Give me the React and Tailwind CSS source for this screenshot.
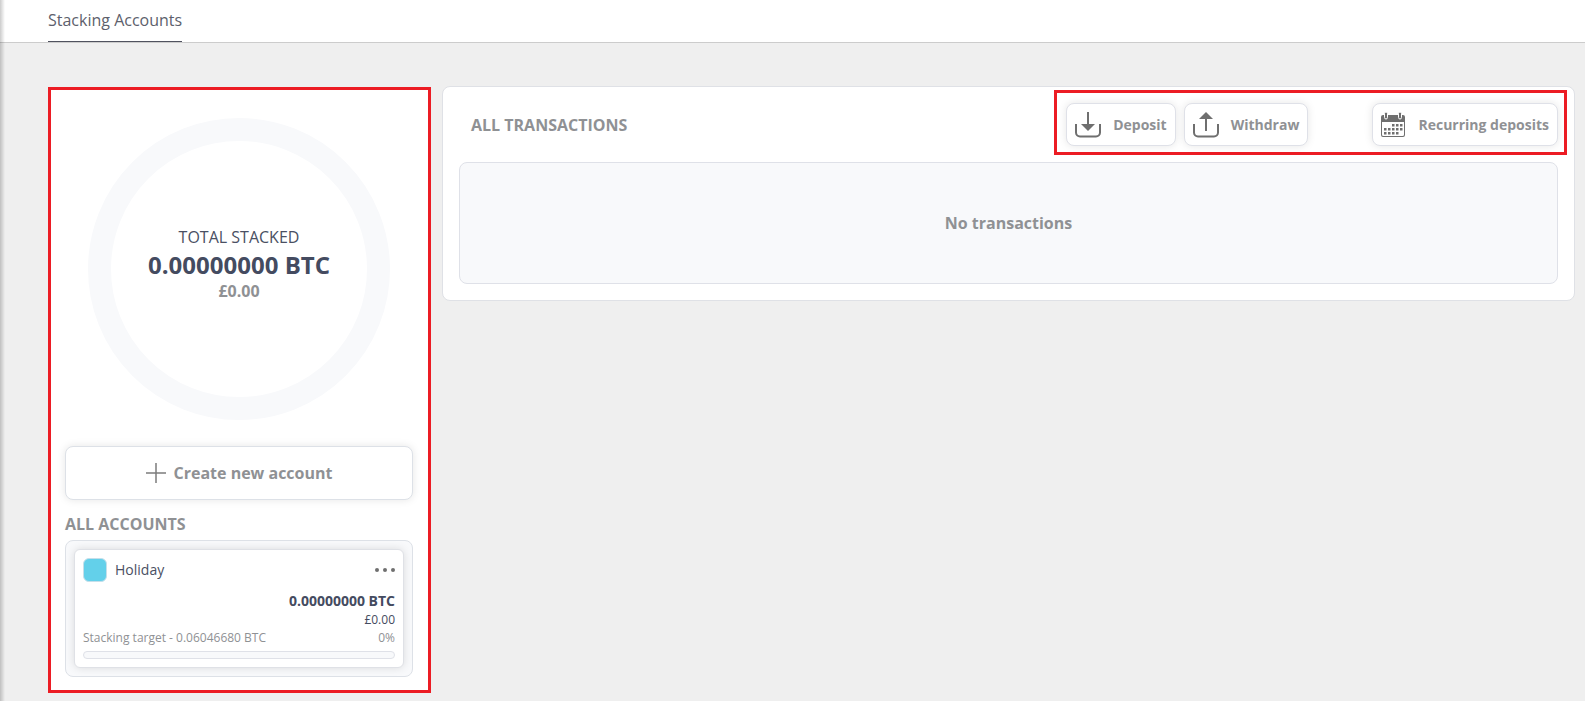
import React from "react";

const accounts = [
  {
    id: 1,
    name: "Holiday",
    balance: "0.00000000 BTC",
    fiat: "£0.00",
    target: "0.06046680 BTC",
    progress: 0,
  },
];

/* ================= ICONS ================= */

const TrayIcon = ({ up }) => (
  <svg width="26" height="26" viewBox="0 0 26 26" fill="none" aria-hidden="true">
    <path
      d="M1 12v8.500a4 4 0 0 0 4 4h16a4 4 0 0 0 4-4V12"
      stroke="#6f6f6f"
      strokeWidth="2"
    />
    {up ? (
      <>
        <path d="M13 5v14" stroke="#6f6f6f" strokeWidth="2" />
        <path d="M13 0l7 7H6z" fill="#6f6f6f" />
      </>
    ) : (
      <>
        <path d="M13 0v14" stroke="#6f6f6f" strokeWidth="2" />
        <path d="M13 19l7-7H6z" fill="#6f6f6f" />
      </>
    )}
  </svg>
);

const calendarDays = [
  [11, 12], [15, 12], [19, 12],
  [3, 16], [7, 16], [11, 16], [15, 16], [19, 16],
  [3, 20], [7, 20], [11, 20], [15, 20],
];

const CalendarIcon = () => (
  <svg width="25" height="26" viewBox="0 0 25 26" aria-hidden="true">
    <path
      fill="#6f6f6f"
      fillRule="evenodd"
      d="M2 3h20a2 2 0 0 1 2 2v18a2 2 0 0 1-2 2H2a2 2 0 0 1-2-2V5a2 2 0 0 1 2-2zM1 10v12.500a1.500 1.500 0 0 0 1.500 1.500h19a1.500 1.500 0 0 0 1.500-1.500V10z"
    />
    <rect x="3.500" y="0" width="3" height="7" rx="1.500" fill="#6f6f6f" stroke="#fff" />
    <rect x="17.500" y="0" width="3" height="7" rx="1.500" fill="#6f6f6f" stroke="#fff" />
    {calendarDays.map(([x, y]) => (
      <rect key={`${x}-${y}`} x={x} y={y} width="2.500" height="2.500" fill="#6f6f6f" />
    ))}
  </svg>
);

const PlusIcon = () => (
  <svg width="20" height="20" viewBox="0 0 20 20" aria-hidden="true">
    <path d="M10 0v20M0 10h20" stroke="#7c7c7c" strokeWidth="1.500" />
  </svg>
);

const DotsIcon = () => (
  <svg width="20" height="4" viewBox="0 0 20 4" fill="#6f6f6f" aria-hidden="true">
    <circle cx="2" cy="2" r="2" />
    <circle cx="10" cy="2" r="2" />
    <circle cx="18" cy="2" r="2" />
  </svg>
);

/* ================= PARTS ================= */

const ActionButton = ({ icon, label }) => (
  <button
    type="button"
    className="flex h-[43px] items-center gap-3 rounded-lg border border-[#dfe1e8] bg-white px-2 text-sm font-bold text-[#8f9194] shadow-[0_0_8px_rgba(0,0,0,0.1)]"
  >
    {icon}
    {label}
  </button>
);

const AccountCard = ({ account }) => (
  <div className="rounded-md border border-[#dfe1e6] bg-white p-2 shadow-[0_0_8px_rgba(0,0,0,0.12)]">
    <div className="flex h-6 items-center gap-2">
      <span className="h-6 w-6 rounded-md border border-[#c5dfea] bg-[#63d0ea]" />
      <span className="flex-1 text-sm leading-[22px] text-[#4a5063]">{account.name}</span>
      <button type="button" aria-label="Account options">
        <DotsIcon />
      </button>
    </div>

    <div className="mt-2 text-right text-sm leading-[21px] font-bold text-[#444b60]">
      {account.balance}
    </div>
    <div className="text-right text-xs leading-[18px] text-[#444b60]">
      {account.fiat}
    </div>
    <div className="flex justify-between text-xs leading-[18px] text-[#8f9194]">
      <span>Stacking target - {account.target}</span>
      <span>{account.progress}%</span>
    </div>

    <div className="mt-1 h-2 overflow-hidden rounded-full border border-[#dfe1e8] bg-[#f8f9fb]">
      <div
        className="h-full bg-[#63d0ea]"
        style={{ width: `${account.progress}%` }}
      />
    </div>
  </div>
);

const App = () => {
  return (
    <div className="relative min-h-screen bg-[#efefef] font-['Open_Sans',sans-serif]">

      {/* shadow of the side menu */}
      <div className="absolute inset-y-0 left-0 w-[5px] bg-linear-to-r from-black/20 to-transparent" />

      {/* ================= HEADER ================= */}
      <header className="flex h-[43px] border-b border-[#cccccc] bg-white pl-12">
        <a
          href="#stacking"
          className="border-b border-[#50525f] pt-2 text-base text-[#5d5f6c]"
        >
          Stacking Accounts
        </a>
      </header>

      <main className="flex items-start gap-[11px] pt-[43px] pr-[10px] pl-12">

        {/* ================= ACCOUNTS ================= */}
        <section className="mt-px w-[383px] shrink-0 border-3 border-[#ec1c24] bg-white pt-[28px] pr-[15px] pb-[13px] pl-[14px]">
          <div className="mx-auto flex h-[302px] w-[302px] flex-col items-center justify-center rounded-full border-[23px] border-[#f8f9fb] pb-3">
            <div className="text-base text-[#4a5063]">TOTAL STACKED</div>
            <div className="text-2xl font-bold text-[#444b60]">0.00000000 BTC</div>
            <div className="text-base leading-5 font-bold text-[#8f9194]">£0.00</div>
          </div>

          <button
            type="button"
            className="mt-[26px] flex h-[54px] w-full items-center justify-center gap-2 rounded-lg border border-[#dde1e7] bg-white text-base font-bold text-[#8f9194] shadow-[0_0_8px_rgba(0,0,0,0.1)]"
          >
            <PlusIcon />
            Create new account
          </button>

          <h2 className="mt-3 mb-1 text-base font-bold text-[#8f9194]">ALL ACCOUNTS</h2>

          <div className="rounded-lg border border-[#dde1e7] bg-[#f8f9fb] p-2">
            {accounts.map((account) => (
              <AccountCard key={account.id} account={account} />
            ))}
          </div>
        </section>

        {/* ================= TRANSACTIONS ================= */}
        <section className="min-w-0 flex-1 rounded-lg border border-[#dfe1e6] bg-white">
          <div className="flex items-center justify-between pt-[3px] pr-[7px] pl-7">
            <h2 className="pt-1 text-base font-bold text-[#8f9194]">ALL TRANSACTIONS</h2>

            <div className="flex border-3 border-[#ec1c24] pt-[10px] pr-[6px] pb-[6px] pl-[9px]">
              <div className="flex gap-2">
                <ActionButton icon={<TrayIcon />} label="Deposit" />
                <ActionButton icon={<TrayIcon up />} label="Withdraw" />
              </div>
              <div className="ml-16">
                <ActionButton icon={<CalendarIcon />} label="Recurring deposits" />
              </div>
            </div>
          </div>

          <div className="mx-4 mt-[7px] mb-4 flex h-[122px] items-center justify-center rounded-lg border border-[#dfe1e8] bg-[#f8f9fb] text-base font-bold text-[#8f9194]">
            No transactions
          </div>
        </section>

      </main>
    </div>
  );
};

export default App;
